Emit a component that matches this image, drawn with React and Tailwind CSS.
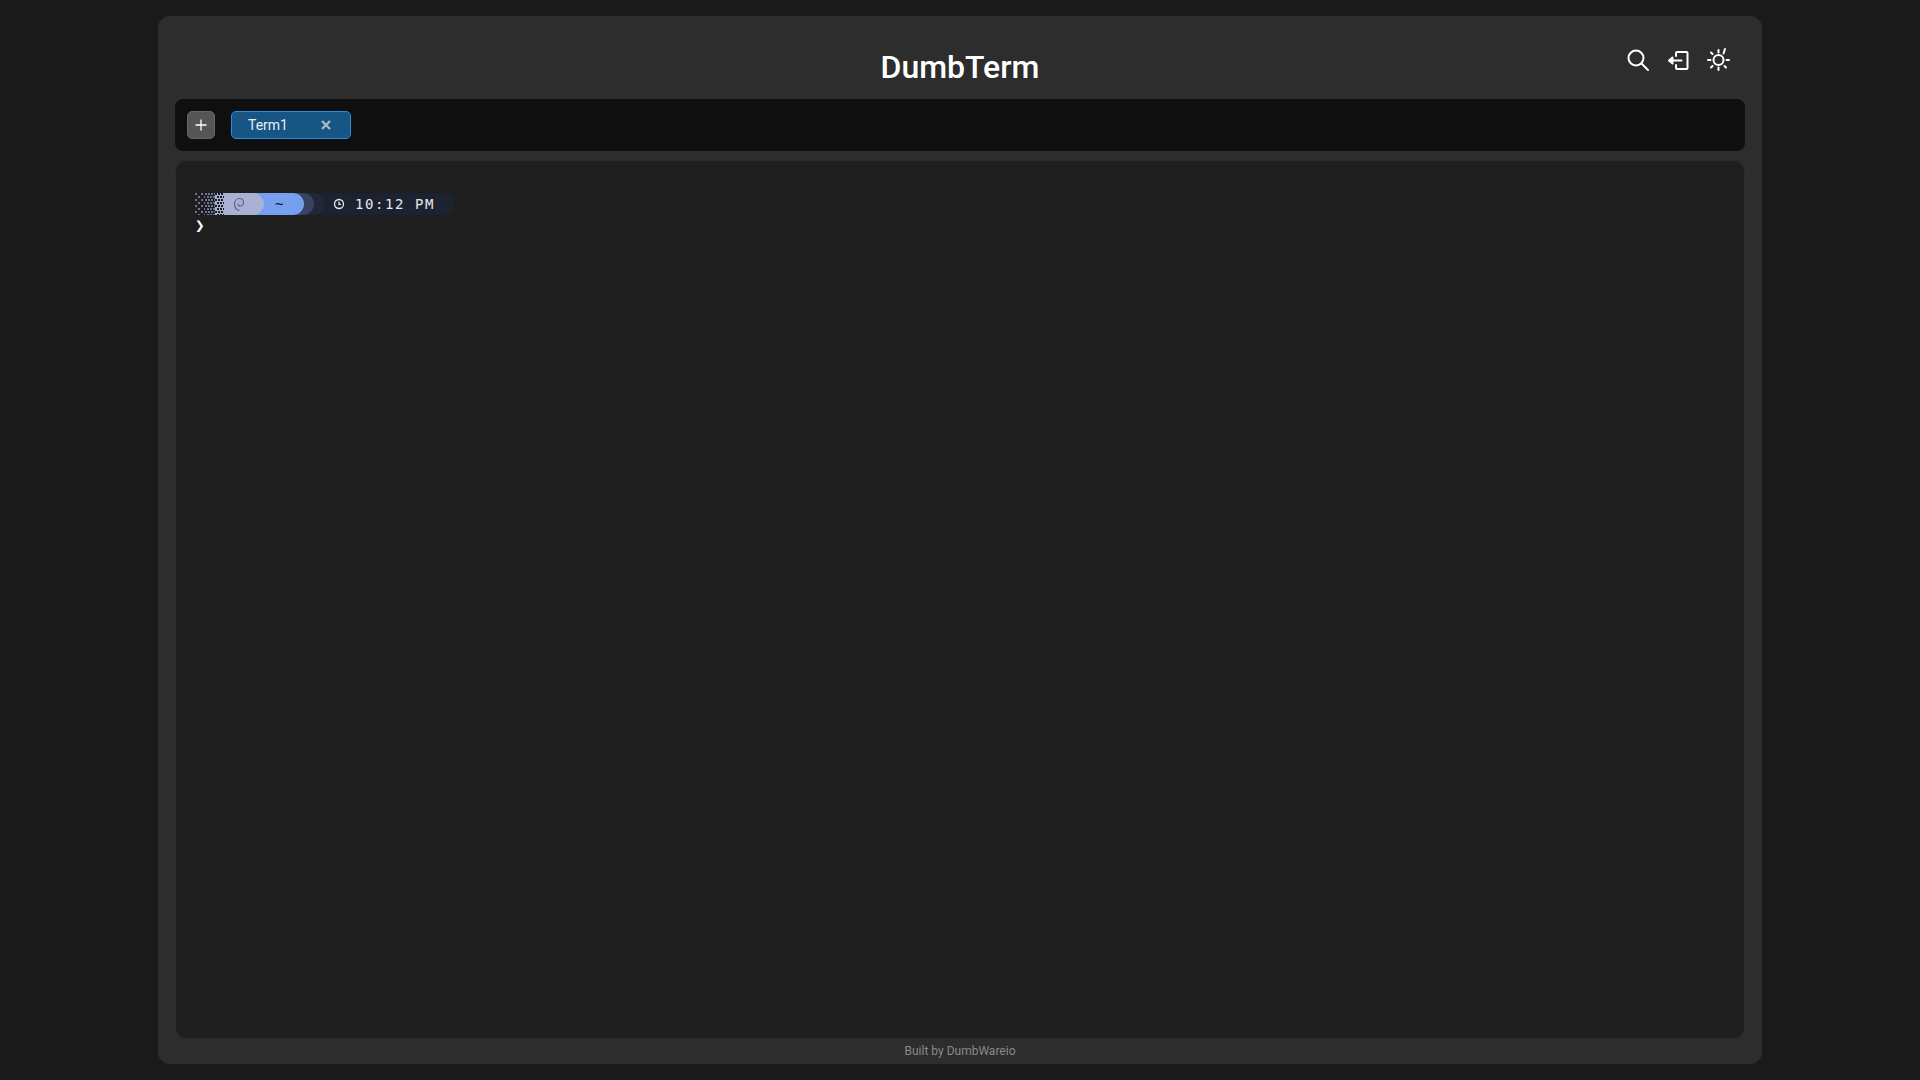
import React from "react";

function Dots({ w, period, rowStep, size, fill, stagger }) {
  const dots = [];
  for (let r = 0; r * rowStep < 22; r++) {
    const off = stagger && r % 2 ? period / 2 : 0;
    for (let x = off; x < w; x += period) {
      dots.push(<rect key={`${r}-${x}`} x={x} y={r * rowStep} width={size} height={size} fill={fill} />);
    }
  }
  return (
    <svg width={w} height="22" className="block shrink-0" shapeRendering="crispEdges">
      {dots}
    </svg>
  );
}

export default function App() {
  return (
    <div className="h-[1080px] w-full bg-[#1a1a1a] flex justify-center pt-4 overflow-hidden font-['Roboto',sans-serif]">
      <div className="w-[1604px] h-[1048px] bg-[#2d2d2d] rounded-xl px-[17px] flex flex-col relative">
        <header className="h-[83px] shrink-0 flex justify-center pt-[32px]">
          <h1 className="text-[32px] leading-[38px] font-medium text-white">DumbTerm</h1>
          <div className="absolute left-[1468px] top-[31px] flex items-center gap-[16px] text-white">
            <svg width="24" height="24" viewBox="0 0 24 24" fill="none" stroke="currentColor" strokeWidth="2" strokeLinecap="round">
              <circle cx="10" cy="10" r="7.500" />
              <path d="M15.500 15.500 22 22" />
            </svg>
            <svg width="24" height="24" viewBox="0 0 24 24" fill="none" stroke="currentColor" strokeWidth="2" strokeLinecap="round" strokeLinejoin="round">
              <path d="M11 4h9.500a1 1 0 0 1 1 1v15a1 1 0 0 1-1 1H11a1 1 0 0 1-1-1v-3M10 8V5a1 1 0 0 1 1-1" />
              <path d="M15.500 12.500H6" />
              <path d="M6.500 9.500 3 12.500l3.500 3z" fill="currentColor" />
            </svg>
            <svg width="26" height="26" viewBox="0 0 26 26" fill="none" stroke="currentColor" strokeWidth="2" strokeLinecap="round">
              <circle cx="12.500" cy="13" r="5" />
              <path d="M12.500 3v2.500M12.500 20.500V23M2 13h2.500M20.500 13H23M5 5.500l1.500 1.500M18.500 19l1.500 1.500M5 20.500 6.500 19M19 2l-1.500 4.500" />
            </svg>
          </div>
        </header>
        <div className="h-[52px] shrink-0 bg-[#0f0f0f] rounded-lg flex items-center pl-3">
          <button className="w-[28px] h-[28px] rounded-[5px] bg-[#555555] border border-[#666666] flex items-center justify-center">
            <svg width="12" height="12" viewBox="0 0 12 12" stroke="#ffffff" strokeWidth="1.300"><path d="M6 0.500v11M0.500 6h11" /></svg>
          </button>
          <div className="ml-4 w-[120px] h-[28px] rounded-[5px] bg-[#175585] border border-[#2b8de0] flex items-center justify-between pl-4 pr-[19px] text-sm text-[#e8eef4]">
            <span>Term1</span>
            <svg width="10" height="10" viewBox="0 0 10 10" stroke="#a9bccb" strokeWidth="2.200"><path d="M1 1l8 8M9 1l-8 8" /></svg>
          </div>
        </div>
        <main className="mt-[9px] h-[879px] shrink-0 bg-[#1e1e1e] border border-[#2a2a2a] rounded-xl pt-[32px] pl-[19px]">
          <div className="flex h-[22px] items-center font-['DejaVu_Sans_Mono',monospace] text-sm">
            <Dots w={10} period={6} rowStep={3} size={2} fill="#6f7590" stagger />
            <Dots w={10} period={3} rowStep={3} size={2} fill="#6f7590" stagger />
            <div className="w-[9px] h-[22px] bg-[#a9b1d6] shrink-0">
              <Dots w={9} period={3} rowStep={3} size={2} fill="#1e1e1e" stagger />
            </div>
            <div className="w-[40px] h-[22px] bg-[#a9b1d6] rounded-r-[11px] flex items-center pl-[9px] z-30 relative shrink-0">
              <svg width="12" height="15" viewBox="0 0 12 15" fill="none" stroke="#5e6478" strokeWidth="1.100"><path d="M6.500 13.500C3.500 13 1.500 10.500 1.500 7.300 1.500 3.800 3.800 1.500 6.500 1.500c2.500 0 4 1.800 4 4S9 9 7.200 9C5.700 9 5 7.800 5 6.700" /></svg>
            </div>
            <div className="w-[51px] -ml-[11px] pl-[22px] h-[22px] bg-[#769ff0] rounded-r-[11px] z-20 relative shrink-0 text-[#111827] flex items-center text-sm">~</div>
            <div className="w-[21px] -ml-[11px] h-[22px] bg-[#394260] rounded-r-[11px] z-10 relative shrink-0" />
            <div className="w-[21px] -ml-[11px] h-[22px] bg-[#212736] rounded-r-[11px] z-[5] relative shrink-0" />
            <div className="w-[142px] -ml-[11px] h-[22px] bg-[#1d2230] rounded-r-[11px] shrink-0 text-[#e6e8ec] flex items-center pl-[20px] gap-[10px] tracking-[1.58px]">
              <svg width="12" height="12" viewBox="0 0 12 12" fill="none" stroke="#e6e8ec" strokeWidth="1.300"><circle cx="6" cy="6" r="4.500" /><path d="M6 3.500V6.300H8" /></svg>
              <span>10:12 PM</span>
            </div>
          </div>
          <div className="h-[22px] flex items-center text-white font-['DejaVu_Sans_Mono',monospace] font-bold text-base">❯</div>
        </main>
        <footer className="h-[25px] shrink-0 flex items-start pt-[4px] justify-center text-xs text-[#8a8a8a]">Built by DumbWareio</footer>
      </div>
    </div>
  );
}
